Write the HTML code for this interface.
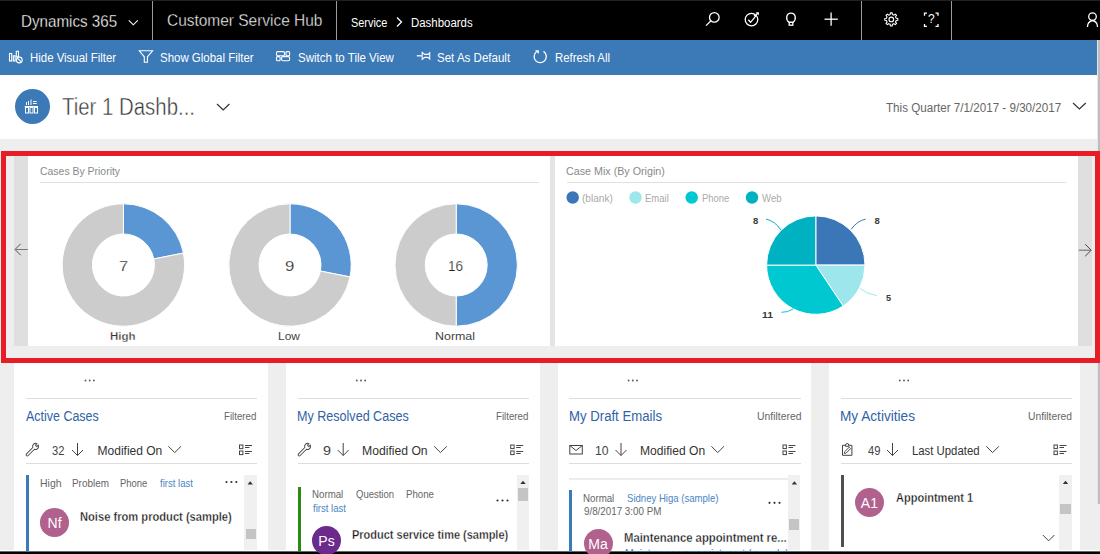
<!DOCTYPE html>
<html><head><meta charset="utf-8">
<style>
html,body{margin:0;padding:0;}
body{width:1100px;height:554px;overflow:hidden;position:relative;background:#eeeeee;font-family:"Liberation Sans",sans-serif;}
.t{position:absolute;white-space:nowrap;line-height:1;transform-origin:0 0;}
.a{position:absolute;}
.av{position:absolute;border-radius:50%;color:#fff;font-size:14px;display:flex;align-items:center;justify-content:center;line-height:1;padding-top:1px;box-sizing:border-box;}
</style></head><body>
<!-- nav -->
<div class="a" style="left:0;top:0;width:1100px;height:40px;background:#000"></div>
<div class="a" style="left:0;top:0;width:1100px;height:1px;background:#222"></div>
<div class="a" style="left:152px;top:1px;width:1px;height:39px;background:#9c9c9c"></div>
<div class="a" style="left:336px;top:1px;width:1px;height:39px;background:#9c9c9c"></div>
<div class="a" style="left:861px;top:1px;width:1px;height:39px;background:#9c9c9c"></div>
<div class="a" style="left:951px;top:1px;width:1px;height:39px;background:#9c9c9c"></div>
<svg class="a" style="left:0;top:0" width="1100" height="40" fill="none" stroke="#fff" stroke-width="1.3">
  <polyline points="128.8,20.3 133.3,24.8 137.8,20.3" stroke-width="1.05"/>
  <polyline points="397,17.5 401.5,22 397,26.5"/>
  <circle cx="714.3" cy="17.4" r="4.8"/>
  <line x1="710.8" y1="21" x2="706" y2="25.6"/>
  <circle cx="751.5" cy="19.6" r="6.3"/>
  <polyline points="748.3,19.8 750.6,22.3 756.5,15.2"/>
  <line x1="754" y1="16" x2="758.5" y2="12.8"/><path d="M755.6,12.3 L759,12.4 L758.6,15.6 Z" fill="#fff" stroke="none"/>
  <path d="M788.9,22.3 C785.3,19.6 786.2,13.2 791,13.2 C795.8,13.2 796.7,19.6 793.1,22.3 Z"/><rect x="789.2" y="22.3" width="3.6" height="2.9"/>
  <line x1="824.5" y1="19.2" x2="837.8" y2="19.2"/>
  <line x1="831.1" y1="12.6" x2="831.1" y2="25.8"/>
  <circle cx="891.3" cy="19.4" r="2.3" stroke-width="1.1"/>
  <path d="M890.18,14.53 L890.38,12.86 L892.22,12.86 L892.42,14.53 L893.95,15.16 L895.27,14.13 L896.57,15.43 L895.54,16.75 L896.17,18.28 L897.84,18.48 L897.84,20.32 L896.17,20.52 L895.54,22.05 L896.57,23.37 L895.27,24.67 L893.95,23.64 L892.42,24.27 L892.22,25.94 L890.38,25.94 L890.18,24.27 L888.65,23.64 L887.33,24.67 L886.03,23.37 L887.06,22.05 L886.43,20.52 L884.76,20.32 L884.76,18.48 L886.43,18.28 L887.06,16.75 L886.03,15.43 L887.33,14.13 L888.65,15.16 Z" stroke-width="1.1" stroke-linejoin="round"/>
  <path d="M927,13.2 h-2.5 v2.5 M935.5,13.2 h2.5 v2.5 M927,26.4 h-2.5 v-2.5 M935.5,26.4 h2.5 v-2.5"/>
  <path d="M1092.5,20.5 a6,6 0 0 1 5,6.5 M1092.5,20.5 a6,6 0 0 0 -5,6.5"/>
  <circle cx="1092.5" cy="16.6" r="3.8"/>
</svg>
<div class="t" style="left:928px;top:13px;font-size:12px;color:#fff">?</div>
<!-- command bar -->
<div class="a" style="left:0;top:40px;width:1100px;height:35px;background:#3b79b7"></div>
<svg class="a" style="left:0;top:40px" width="700" height="35" fill="none" stroke="#fff" stroke-width="1.1">
  <rect x="9.5" y="13.5" width="2.2" height="7.5"/>
  <rect x="13.3" y="15.8" width="1.8" height="5.2"/>
  <rect x="16.3" y="11.3" width="2.2" height="5.5"/>
  <circle cx="19.3" cy="20" r="2.9" fill="#3b79b7"/>
  <line x1="17.4" y1="18.1" x2="21.2" y2="21.9"/>
  <path d="M139.3,10.8 h13.3 l-5.2,6 v5.4 h-3.1 v-5.4 z"/>
  <rect x="276.5" y="11.6" width="8" height="4.2" rx="1.2"/>
  <rect x="286" y="11.6" width="3.6" height="4.2" rx="1"/>
  <rect x="276.5" y="16.6" width="3.6" height="4.2" rx="1"/>
  <rect x="281.6" y="16.6" width="8" height="4.2" rx="1.2"/>
  <line x1="416.8" y1="15.8" x2="421.7" y2="15.8" stroke-width="1.3"/>
  <path d="M422.2,12.4 l2.5,2 h3.2 l1.8,-1.6 v6.2 l-1.8,-1.6 h-3.2 l-2.5,2 z"/>
  <path d="M543.5,11.4 A6.1,6.1 0 1 1 536.4,11.8" stroke-width="1.3"/>
  <path d="M535,10.3 L538.8,10.3 L538.8,14 Z" fill="#fff" stroke="none"/>
</svg>
<!-- title area -->
<div class="a" style="left:0;top:75px;width:1100px;height:64px;background:#fff"></div>
<div class="a" style="left:14.5px;top:89.3px;width:35px;height:35px;border-radius:50%;background:#3b79b7"></div>
<svg class="a" style="left:0;top:75px" width="1100" height="64" fill="none" stroke="#333" stroke-width="1.2">
  <polyline points="217,29 223.2,35 229.4,29"/>
  <polyline points="1073,28 1079.4,34 1085.8,28"/>
  <g stroke="#fff" stroke-width="1" fill="none">
    <rect x="25.5" y="32.5" width="3" height="5.5"/>
    <rect x="30" y="32.5" width="3" height="5.5"/>
    <rect x="34.5" y="32.5" width="3" height="5.5"/>
    <line x1="24.7" y1="31.5" x2="38" y2="31.5"/>
    <line x1="26.5" y1="27" x2="26.5" y2="30"/>
    <line x1="28.5" y1="26" x2="28.5" y2="30"/>
    <line x1="31" y1="24.5" x2="31" y2="30"/>
    <line x1="33" y1="26.5" x2="36.7" y2="26.5"/>
    <line x1="33" y1="28.5" x2="36.7" y2="28.5"/>
  </g>
</svg>
<!-- page scrollbar -->
<div class="a" style="left:1097px;top:40px;width:1px;height:464px;background:#e8e8e8"></div>
<div class="a" style="left:1098px;top:40px;width:2px;height:464px;background:#bdbdbd"></div>
<!-- red highlight panel -->
<div class="a" style="left:1px;top:151px;width:1099px;height:212px;background:#e81c24"></div>
<div class="a" style="left:6px;top:156px;width:1089px;height:202px;background:#eeeeee"></div>
<div class="a" style="left:14px;top:156px;width:14px;height:190px;background:#dfdfdf"></div>
<div class="a" style="left:28px;top:156px;width:522px;height:190px;background:#fff"></div>
<div class="a" style="left:550px;top:156px;width:5px;height:190px;background:#e4e4e4"></div>
<div class="a" style="left:555px;top:156px;width:523px;height:190px;background:#fff"></div>
<div class="a" style="left:1078px;top:156px;width:14px;height:190px;background:#dfdfdf"></div>
<div class="a" style="left:40px;top:182px;width:499px;height:1px;background:#e0e0e0"></div>
<div class="a" style="left:567px;top:182px;width:499px;height:1px;background:#e0e0e0"></div>
<svg class="a" style="left:0;top:156px" width="1100" height="190">
  <g fill="none" stroke="#666" stroke-width="1">
    <polyline points="20.7,87.8 15,93.5 20.7,99.2" stroke="#555"/><line x1="15.5" y1="93.5" x2="27.7" y2="93.5" stroke="#777"/>
    <polyline points="1085.2,88.2 1091.2,94.2 1085.2,100.2" stroke="#444"/><line x1="1078.7" y1="94.2" x2="1090.5" y2="94.2" stroke="#666"/>
  </g>
</svg>
<svg class="a" style="left:0;top:0" width="1100" height="554">
  <!-- donuts -->
  <g stroke="#fff" stroke-width="1">
  <path d="M123.40,203.80 A61.2,61.2 0 0 1 183.42,253.06 L153.80,258.95 A31,31 0 0 0 123.40,234.00 Z" fill="#5b96d4"/>
<path d="M183.42,253.06 A61.2,61.2 0 1 1 123.40,203.80 L123.40,234.00 A31,31 0 1 0 153.80,258.95 Z" fill="#cccccc"/>
<path d="M290.00,203.80 A61.2,61.2 0 0 1 350.02,276.94 L320.40,271.05 A31,31 0 0 0 290.00,234.00 Z" fill="#5b96d4"/>
<path d="M350.02,276.94 A61.2,61.2 0 1 1 290.00,203.80 L290.00,234.00 A31,31 0 1 0 320.40,271.05 Z" fill="#cccccc"/>
<path d="M456.20,203.80 A61.2,61.2 0 0 1 456.20,326.20 L456.20,296.00 A31,31 0 0 0 456.20,234.00 Z" fill="#5b96d4"/>
<path d="M456.20,326.20 A61.2,61.2 0 0 1 456.20,203.80 L456.20,234.00 A31,31 0 0 0 456.20,296.00 Z" fill="#cccccc"/>
<path d="M815.8,265.1 L815.80,215.90 A49.2,49.2 0 0 1 865.00,265.10 Z" fill="#3b77b7"/>
<path d="M815.8,265.1 L865.00,265.10 A49.2,49.2 0 0 1 843.13,306.01 Z" fill="#9de7ec"/>
<path d="M815.8,265.1 L843.13,306.01 A49.2,49.2 0 0 1 766.60,265.10 Z" fill="#00c8d1"/>
<path d="M815.8,265.1 L766.60,265.10 A49.2,49.2 0 0 1 815.80,215.90 Z" fill="#00b2c1"/>
  </g>
</svg>
<!-- cards -->
<div class="a" style="left:14px;top:363px;width:254px;height:189px;background:#fff"></div>
<div class="a" style="left:286px;top:363px;width:254px;height:189px;background:#fff"></div>
<div class="a" style="left:558px;top:363px;width:253px;height:189px;background:#fff"></div>
<div class="a" style="left:829px;top:363px;width:251px;height:189px;background:#fff"></div>
<div class="a" style="left:0;top:550px;width:1100px;height:1px;background:#fff"></div>
<div class="a" style="left:0;top:551px;width:1100px;height:1px;background:#666"></div>
<div class="a" style="left:0;top:552px;width:1100px;height:2px;background:#000"></div>
<!-- card separators -->
<div class="a" style="left:26px;top:398px;width:231px;height:1px;background:#dedede"></div>
<div class="a" style="left:26px;top:463px;width:231px;height:1px;background:#dedede"></div>
<div class="a" style="left:298px;top:398px;width:231px;height:1px;background:#dedede"></div>
<div class="a" style="left:298px;top:463px;width:231px;height:1px;background:#dedede"></div>
<div class="a" style="left:569px;top:398px;width:232px;height:1px;background:#dedede"></div>
<div class="a" style="left:569px;top:463px;width:232px;height:1px;background:#dedede"></div>
<div class="a" style="left:841px;top:398px;width:231px;height:1px;background:#dedede"></div>
<div class="a" style="left:841px;top:463px;width:231px;height:1px;background:#dedede"></div>
<!-- card body bars & scrollbars -->
<div class="a" style="left:26px;top:475px;width:3px;height:77px;background:#3b79b7"></div>
<div class="a" style="left:298px;top:487px;width:3px;height:65px;background:#2a8a12"></div>
<div class="a" style="left:569px;top:478px;width:220px;height:2px;background:#ececec"></div>
<div class="a" style="left:569px;top:490px;width:3px;height:62px;background:#3b79b7"></div>
<div class="a" style="left:841px;top:475px;width:3px;height:72px;background:#505050"></div>
<div class="a" style="left:244px;top:475px;width:12.5px;height:75px;background:#f0f0f0"></div>
<div class="a" style="left:246px;top:529px;width:9.5px;height:10px;background:#c4c4c4"></div>
<div class="a" style="left:517px;top:475px;width:12px;height:75px;background:#f0f0f0"></div>
<div class="a" style="left:518px;top:488px;width:10px;height:12.5px;background:#c4c4c4"></div>
<div class="a" style="left:788.4px;top:475px;width:12px;height:75px;background:#f0f0f0"></div>
<div class="a" style="left:789.4px;top:519.4px;width:10px;height:10.6px;background:#c4c4c4"></div>
<div class="a" style="left:1059.4px;top:475px;width:12.3px;height:75px;background:#f0f0f0"></div>
<div class="a" style="left:1060.4px;top:504px;width:10.3px;height:10.3px;background:#c4c4c4"></div>
<!-- avatars -->
<div class="av" style="left:40.3px;top:508.4px;width:28.6px;height:28.6px;background:#b0618e">Nf</div>
<div class="av" style="left:312px;top:526px;width:29px;height:29px;background:#6b2a8c">Ps</div>
<div class="av" style="left:583.5px;top:529.3px;width:29px;height:29px;background:#b0618e">Ma</div>
<div class="av" style="left:854.9px;top:488.4px;width:29px;height:29px;background:#b0618e">A1</div>
<svg class="a" style="left:0;top:0" width="1100" height="554">
  <!-- dots -->
  <g fill="#555">
    <circle cx="85.5" cy="380.5" r="0.9"/><circle cx="89.7" cy="380.5" r="0.9"/><circle cx="93.9" cy="380.5" r="0.9"/>
    <circle cx="356.8" cy="380.5" r="0.9"/><circle cx="361" cy="380.5" r="0.9"/><circle cx="365.2" cy="380.5" r="0.9"/>
    <circle cx="628.6" cy="380.5" r="0.9"/><circle cx="632.8" cy="380.5" r="0.9"/><circle cx="637" cy="380.5" r="0.9"/>
    <circle cx="899.8" cy="380.5" r="0.9"/><circle cx="904" cy="380.5" r="0.9"/><circle cx="908.2" cy="380.5" r="0.9"/>
  </g>
  <g fill="#333">
    <circle cx="226.5" cy="482" r="1.1"/><circle cx="231.4" cy="482" r="1.1"/><circle cx="236.3" cy="482" r="1.1"/>
    <circle cx="497.5" cy="500.5" r="1.1"/><circle cx="502.5" cy="500.5" r="1.1"/><circle cx="507.5" cy="500.5" r="1.1"/>
    <circle cx="769.5" cy="502.8" r="1.1"/><circle cx="774.5" cy="502.8" r="1.1"/><circle cx="779.5" cy="502.8" r="1.1"/>
  </g>
  <g fill="#333">
    <path d="M247.5,484.5 h5.4 l-2.7,-3.2 z"/>
    <path d="M520.3,484 h5.4 l-2.7,-3.2 z"/>
    <path d="M791.7,484.5 h5.4 l-2.7,-3.2 z"/>
    <path d="M1062.8,484 h5.4 l-2.7,-3.2 z"/>
  </g>
  <!-- icon row -->
  <g fill="none" stroke="#444" stroke-width="1">
    <!-- arrows -->
    <path d="M77.5,443 v12.5 M72,450 l5.5,5.5 l5.5,-5.5"/>
    <path d="M343.2,443 v12.5 M337.7,450 l5.5,5.5 l5.5,-5.5"/>
    <path d="M621,443 v12.5 M615.5,450 l5.5,5.5 l5.5,-5.5"/>
    <path d="M892.5,443 v12.5 M887,450 l5.5,5.5 l5.5,-5.5"/>
    <!-- chevrons -->
    <polyline points="168.4,446.3 174.7,452.6 181,446.3"/>
    <polyline points="434.2,446.3 440.5,452.6 446.8,446.3"/>
    <polyline points="711.4,446.3 717.7,452.6 724,446.3"/>
    <polyline points="986.3,446.3 992.6,452.6 998.9,446.3"/>
    <polyline points="1042.8,535 1048.6,540.8 1054.4,535"/>
    <!-- list icons -->
    <g id="li">
    <rect x="239.5" y="445" width="3.4" height="3.6"/><rect x="239.5" y="451" width="3.4" height="3.6"/>
    <path d="M245,445.5 h7 M245,447.5 h4.5 M245,451.5 h7 M245,453.5 h4.5"/>
    </g>
    <use href="#li" x="271.2"/>
    <use href="#li" x="543.5"/>
    <use href="#li" x="814.5"/>
    <!-- wrench -->
    <path transform="translate(35.6,446.4) rotate(45)" d="M-1.2,11.7 L-1.2,2.75 A3,3 0 0 1 -0.95,-2.85 L-0.95,-0.7 L0.95,-0.7 L0.95,-2.85 A3,3 0 0 1 1.2,2.75 L1.2,11.7 A1.2,1.2 0 0 1 -1.2,11.7 Z" stroke-width="0.95"/>
    <path transform="translate(307.6,446.4) rotate(45)" d="M-1.2,11.7 L-1.2,2.75 A3,3 0 0 1 -0.95,-2.85 L-0.95,-0.7 L0.95,-0.7 L0.95,-2.85 A3,3 0 0 1 1.2,2.75 L1.2,11.7 A1.2,1.2 0 0 1 -1.2,11.7 Z" stroke-width="0.95"/>
    <!-- mail -->
    <rect x="569.8" y="445.5" width="12.5" height="8.5"/>
    <polyline points="569.8,445.5 576,450.5 582.3,445.5"/>
    <!-- clipboard -->
    <path d="M845.6,445.3 h-3.1 v10 h9.4 v-10 h-3.1 M845.6,446.3 v-1.2 a1.6,1.6 0 0 1 3.2,0 v1.2 z"/><path transform="translate(847.2,450.6) rotate(45)" d="M-1,-3.8 h2 v6.6 l-1,1.2 l-1,-1.2 z" stroke-width="0.9"/>
  </g>
</svg>
<!-- legend dots and pie leaders -->
<svg class="a" style="left:0;top:0" width="1100" height="554">
  <circle cx="572.7" cy="197.5" r="6.2" fill="#3b77b7"/>
  <circle cx="635.5" cy="197.5" r="6.2" fill="#9de7ec"/>
  <circle cx="691.7" cy="197.5" r="6.2" fill="#00c8d1"/>
  <circle cx="752" cy="197.5" r="6.2" fill="#00b2c1"/>
  <g fill="none" stroke-width="1">
    <path d="M851.2,229.3 Q857,221 865.7,219.1" stroke="#3b77b7"/>
    <path d="M780.8,229.9 Q775,221 766,219.1" stroke="#00b2c1"/>
    <path d="M859.9,288.5 Q867,294 876.8,295.6" stroke="#9de7ec"/>
    <path d="M793.1,309 Q788,312.5 781.4,312.3" stroke="#00c8d1"/>
  </g>
</svg>
<div class="a" style="left:600px;top:540px;width:190px;height:12px;overflow:hidden"><div class="t" style="left:24.5px;top:8px;font-size:12px;color:#3f7cc0;transform:scaleX(0.87)">Maintenance appointment (sample)</div></div>

<div class="t" style="left:20.65px;top:14px;font-size:16px;color:#fff;transform:scaleX(0.9480);-webkit-text-stroke:0.3px #000;">Dynamics 365</div>
<div class="t" style="left:167.29px;top:12px;font-size:17px;color:#fff;transform:scaleX(0.9089);-webkit-text-stroke:0.4px #000;">Customer Service Hub</div>
<div class="t" style="left:350.69px;top:17px;font-size:12px;color:#fff;transform:scaleX(0.9077);">Service</div>
<div class="t" style="left:411.05px;top:17px;font-size:12px;color:#fff;transform:scaleX(0.9524);">Dashboards</div>
<div class="t" style="left:29.79px;top:52px;font-size:12.5px;color:#fff;transform:scaleX(0.9140);">Hide Visual Filter</div>
<div class="t" style="left:159.88px;top:52px;font-size:12.5px;color:#fff;transform:scaleX(0.9168);">Show Global Filter</div>
<div class="t" style="left:297.68px;top:52px;font-size:12.5px;color:#fff;transform:scaleX(0.9223);">Switch to Tile View</div>
<div class="t" style="left:437.38px;top:52px;font-size:12.5px;color:#fff;transform:scaleX(0.9231);">Set As Default</div>
<div class="t" style="left:554.59px;top:52px;font-size:12.5px;color:#fff;transform:scaleX(0.9102);">Refresh All</div>
<div class="t" style="left:61.80px;top:96px;font-size:23px;color:#333;transform:scaleX(0.8865);-webkit-text-stroke:0.45px #fff;">Tier 1 Dashb...</div>
<div class="t" style="left:886.30px;top:102px;font-size:12px;color:#666;transform:scaleX(0.9689);">This Quarter 7/1/2017 - 9/30/2017</div>
<div class="t" style="left:39.75px;top:166px;font-size:11px;color:#8a8a8a;transform:scaleX(0.9494);">Cases By Priority</div>
<div class="t" style="left:566.03px;top:166px;font-size:11px;color:#8a8a8a;transform:scaleX(0.9740);">Case Mix (By Origin)</div>
<div class="t" style="left:118.83px;top:258px;font-size:15.5px;color:#222;transform:scaleX(1.0714);-webkit-text-stroke:0.25px #fff;">7</div>
<div class="t" style="left:285.31px;top:258px;font-size:15.5px;color:#222;transform:scaleX(1.0857);-webkit-text-stroke:0.25px #fff;">9</div>
<div class="t" style="left:448.12px;top:258px;font-size:15.5px;color:#222;transform:scaleX(0.8750);-webkit-text-stroke:0.25px #fff;">16</div>
<div class="t" style="left:110.16px;top:331px;font-size:11px;color:#333;font-weight:700;transform:scaleX(1.0435);-webkit-text-stroke:0.3px #fff;">High</div>
<div class="t" style="left:278.32px;top:331px;font-size:11px;color:#444;transform:scaleX(1.0842);">Low</div>
<div class="t" style="left:435.47px;top:331px;font-size:11px;color:#444;transform:scaleX(1.1294);">Normal</div>
<div class="t" style="left:581.99px;top:194px;font-size:10px;color:#aaa;transform:scaleX(1.0103);">(blank)</div>
<div class="t" style="left:645.35px;top:194px;font-size:10px;color:#aaa;transform:scaleX(0.9500);">Email</div>
<div class="t" style="left:701.66px;top:194px;font-size:10px;color:#aaa;transform:scaleX(0.9393);">Phone</div>
<div class="t" style="left:762.40px;top:194px;font-size:10px;color:#aaa;transform:scaleX(0.9600);">Web</div>
<div class="t" style="left:874.40px;top:216px;font-size:9.5px;color:#3a3a3a;font-weight:700;">8</div>
<div class="t" style="left:753.00px;top:216px;font-size:9.5px;color:#3a3a3a;font-weight:700;">8</div>
<div class="t" style="left:885.90px;top:293px;font-size:9.5px;color:#3a3a3a;font-weight:700;transform:scaleX(0.9600);">5</div>
<div class="t" style="left:761.70px;top:310px;font-size:9.5px;color:#3a3a3a;font-weight:700;transform:scaleX(1.1000);">11</div>
<div class="t" style="left:26.20px;top:409px;font-size:14px;color:#3062a5;transform:scaleX(0.8901);">Active Cases</div>
<div class="t" style="left:224.13px;top:412px;font-size:10px;color:#666;transform:scaleX(0.9719);">Filtered</div>
<div class="t" style="left:52.17px;top:445px;font-size:12px;color:#444;transform:scaleX(0.9333);">32</div>
<div class="t" style="left:97.60px;top:445px;font-size:12px;color:#333;">Modified On</div>
<div class="t" style="left:297.10px;top:409px;font-size:14px;color:#3062a5;transform:scaleX(0.8976);">My Resolved Cases</div>
<div class="t" style="left:496.03px;top:412px;font-size:10px;color:#666;transform:scaleX(0.9719);">Filtered</div>
<div class="t" style="left:323.40px;top:445px;font-size:12px;color:#444;transform:scaleX(1.2000);">9</div>
<div class="t" style="left:362.09px;top:445px;font-size:12px;color:#333;transform:scaleX(1.0143);">Modified On</div>
<div class="t" style="left:568.56px;top:409px;font-size:14px;color:#3062a5;transform:scaleX(0.9412);">My Draft Emails</div>
<div class="t" style="left:756.66px;top:412px;font-size:10px;color:#666;transform:scaleX(1.0390);">Unfiltered</div>
<div class="t" style="left:595.28px;top:445px;font-size:12px;color:#444;transform:scaleX(1.0167);">10</div>
<div class="t" style="left:640.49px;top:445px;font-size:12px;color:#333;transform:scaleX(1.0063);">Modified On</div>
<div class="t" style="left:840.03px;top:409px;font-size:14px;color:#3062a5;transform:scaleX(0.9737);">My Activities</div>
<div class="t" style="left:1028.17px;top:412px;font-size:10px;color:#666;transform:scaleX(1.0293);">Unfiltered</div>
<div class="t" style="left:867.50px;top:445px;font-size:12px;color:#444;transform:scaleX(0.9308);">49</div>
<div class="t" style="left:912.05px;top:445px;font-size:12px;color:#333;transform:scaleX(0.9457);">Last Updated</div>
<div class="t" style="left:39.95px;top:478px;font-size:11px;color:#666;transform:scaleX(0.9524);">High</div>
<div class="t" style="left:72.10px;top:478px;font-size:11px;color:#666;transform:scaleX(0.9026);">Problem</div>
<div class="t" style="left:120.04px;top:478px;font-size:11px;color:#666;transform:scaleX(0.8581);">Phone</div>
<div class="t" style="left:160.30px;top:478px;font-size:11px;color:#4a86c5;transform:scaleX(0.8684);">first last</div>
<div class="t" style="left:80.27px;top:511px;font-size:12px;color:#151515;font-weight:700;transform:scaleX(0.9290);-webkit-text-stroke:0.3px #fff;">Noise from product (sample)</div>
<div class="t" style="left:311.62px;top:489px;font-size:11px;color:#666;transform:scaleX(0.8824);">Normal</div>
<div class="t" style="left:356.20px;top:489px;font-size:11px;color:#666;transform:scaleX(0.8636);">Question</div>
<div class="t" style="left:406.12px;top:489px;font-size:11px;color:#666;transform:scaleX(0.8774);">Phone</div>
<div class="t" style="left:312.50px;top:503px;font-size:11px;color:#4a86c5;transform:scaleX(0.8684);">first last</div>
<div class="t" style="left:351.99px;top:529px;font-size:12px;color:#151515;font-weight:700;transform:scaleX(0.9148);-webkit-text-stroke:0.3px #fff;">Product service time (sample)</div>
<div class="t" style="left:582.62px;top:493px;font-size:11px;color:#666;transform:scaleX(0.8824);">Normal</div>
<div class="t" style="left:626.83px;top:493px;font-size:11px;color:#4a86c5;transform:scaleX(0.8702);">Sidney Higa (sample)</div>
<div class="t" style="left:583.50px;top:506px;font-size:11px;color:#666;transform:scaleX(0.8907);">9/8/2017 3:00 PM</div>
<div class="t" style="left:623.96px;top:532px;font-size:12px;color:#151515;font-weight:700;transform:scaleX(0.9421);-webkit-text-stroke:0.3px #fff;">Maintenance appointment re...</div>
<div class="t" style="left:896.00px;top:492px;font-size:12px;color:#151515;font-weight:700;transform:scaleX(0.9179);-webkit-text-stroke:0.3px #fff;">Appointment 1</div>
</body></html>
